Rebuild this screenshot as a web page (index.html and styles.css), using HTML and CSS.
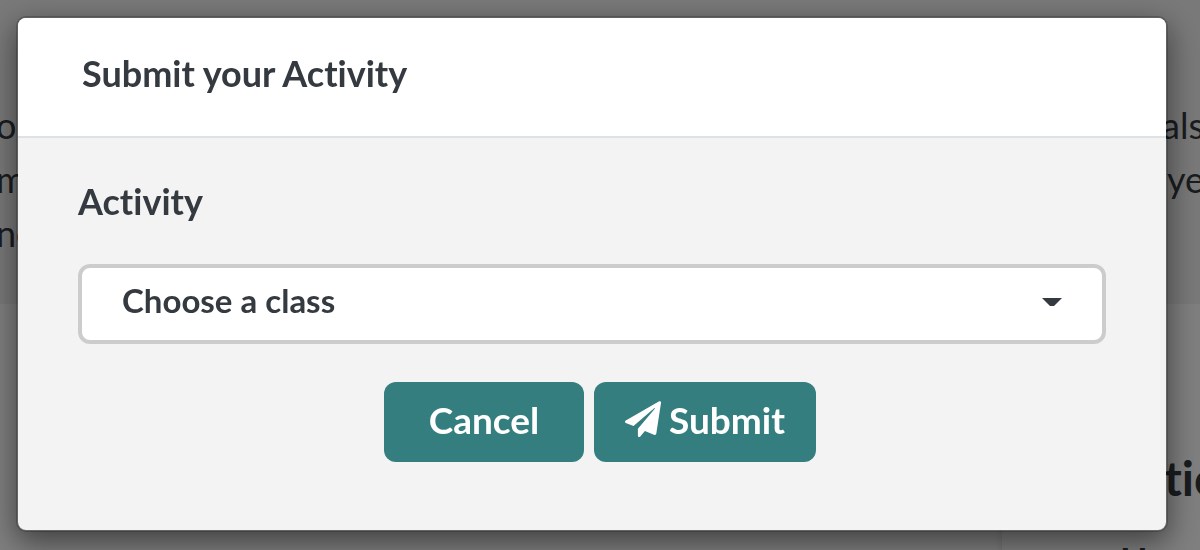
FILE: index.html
```html
<!DOCTYPE html>
<html lang="en">

<head>
    <meta charset="UTF-8">
    <meta name="viewport" content="width=device-width, initial-scale=1.0">
    <title>Submit your Activity</title>
    <link rel="stylesheet" href="styles.css">
</head>

<body>
    <main class="page">
        <section class="intro">
            <p><span>o</span><span>als</span></p>
            <p><span>m</span><span>ye</span></p>
            <p><span>ne</span></p>
        </section>
        <section class="content">
            <aside class="side-card">
                <h2>tion</h2>
                <h3>How</h3>
            </aside>
        </section>
    </main>

    <div class="backdrop">
        <div class="modal" role="dialog" aria-labelledby="modal-title">
            <header class="modal-header">
                <h1 id="modal-title">Submit your Activity</h1>
            </header>
            <form class="modal-body">
                <label for="class-select">Activity</label>
                <div class="select-wrap">
                    <select id="class-select">
                        <option>Choose a class</option>
                    </select>
                    <svg class="caret" viewBox="0 0 20 8" aria-hidden="true">
                        <path d="M0 0h20l-8 8H8z" />
                    </svg>
                </div>
                <div class="actions">
                    <button type="button" class="btn btn-cancel">Cancel</button>
                    <button type="submit" class="btn btn-submit">
                        <svg class="plane" viewBox="0 0 36 36" aria-hidden="true">
                            <path d="M34.2.3.8 19.6c-1.1.6-1 1.8 0 2.3l7.7 3.2L29.2 7.2c.4-.3.9.2.6.6L12.9 27.8v6.9c0 1.4 1.6 1.9 2.4.9l4.6-5.6 9 3.8c1 .4 2.2-.2 2.4-1.4L36 2c.2-1.3-.8-2.2-1.8-1.7z" />
                        </svg>
                        Submit
                    </button>
                </div>
            </form>
        </div>
    </div>
</body>

</html>
```

FILE: styles.css
```css
* {
    box-sizing: border-box;
}

body {
    margin: 0;
    font-family: Lato, "Liberation Sans", sans-serif;
    font-variant-ligatures: none;
    color: #343a40;
    background-color: #fff;
    overflow: hidden;
}

/* page behind the dialog */
.page {
    height: 100vh;
    overflow: hidden;
}

.intro {
    padding: 98px 0 44px;
    background-color: #f2f2f2;
    font-size: 36px;
    line-height: 54px;
}

.intro p {
    display: flex;
    justify-content: space-between;
    margin: 0 -4px;
}

.content {
    display: flex;
    justify-content: flex-end;
    background-color: #fff;
}

.side-card {
    width: 198px;
    padding: 142px 0 0 118px;
    background-color: #fff;
    box-shadow: 0 8px 8px rgba(0, 0, 0, 0.15);
    white-space: nowrap;
}

.side-card h2,
.side-card h3 {
    margin: 0;
    font-size: 48px;
    line-height: 64px;
}

.side-card h2 {
    padding-left: 44px;
}

.side-card h3 {
    padding-top: 18px;
    font-size: 36px;
}

/* dialog */
.backdrop {
    position: fixed;
    inset: 0;
    padding: 16px 32px 16px 16px;
    background-color: rgba(0, 0, 0, 0.5);
}

.modal {
    border: 2px solid rgba(0, 0, 0, 0.2);
    border-radius: 10px;
    background-color: #f3f3f3;
    background-clip: padding-box;
    box-shadow: 0 10px 30px rgba(0, 0, 0, 0.5);
}

.modal-header {
    padding: 30px 64px 38px;
    border-bottom: 2px solid #dee2e6;
    border-radius: 8px 8px 0 0;
    background-color: #fff;
}

.modal-header h1 {
    margin: 0;
    font-size: 36px;
    line-height: 50px;
}

.modal-body {
    padding: 38px 60px 68px;
}

.modal-body label {
    display: block;
    margin-bottom: 38px;
    font-size: 36px;
    font-weight: bold;
    line-height: 50px;
}

.select-wrap {
    position: relative;
    margin-bottom: 38px;
}

.select-wrap select {
    display: block;
    width: 100%;
    height: 80px;
    padding: 0 40px 8px;
    border: 4px solid #ccc;
    border-radius: 12px;
    appearance: none;
    background-color: #fff;
    color: inherit;
    font-family: inherit;
    font-size: 33px;
    font-weight: bold;
}

.caret {
    position: absolute;
    top: 34px;
    right: 44px;
    width: 20px;
    height: 8px;
    fill: #343a40;
    pointer-events: none;
}

.actions {
    display: flex;
    justify-content: center;
    gap: 10px;
    padding-left: 16px;
}

.btn {
    display: flex;
    align-items: center;
    justify-content: center;
    gap: 8px;
    height: 80px;
    padding: 0 30px 6px;
    border: none;
    border-radius: 12px;
    background-color: #357e7f;
    color: #fff;
    font-family: inherit;
    font-size: 37px;
    font-weight: bold;
    cursor: pointer;
}

.btn:hover {
    background-color: #2b696a;
}

.btn-cancel {
    min-width: 200px;
}

.btn-submit {
    min-width: 222px;
}

.plane {
    width: 36px;
    height: 36px;
    fill: currentColor;
}
```
